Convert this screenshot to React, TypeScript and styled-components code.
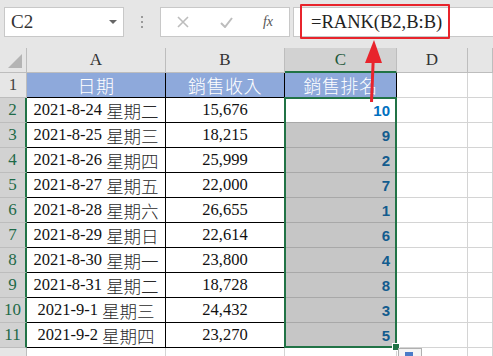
import { Fragment } from "react";
import styled, { createGlobalStyle } from "styled-components";

const GlobalStyle = createGlobalStyle`
  body {
    margin: 0;
    background: #ffffff;
    font-family: "Liberation Serif", "Noto Sans CJK TC", serif;
  }
`

const GREEN = "#217346"
const SERIF = `"Liberation Serif", "Noto Sans CJK TC", serif`

const Frame = styled.div`
  position: relative;
  width: 493px;
  height: 356px;
  overflow: hidden;
  background: #e6e6e6;
`

const Toolbar = styled.div`
  display: flex;
  align-items: flex-start;
  height: 48px;
  box-sizing: border-box;
  padding: 7px 0 0 4px;
`

const NameBox = styled.div`
  display: flex;
  align-items: center;
  justify-content: space-between;
  width: 120px;
  height: 30px;
  box-sizing: border-box;
  padding: 0 6px 0 6px;
  background: #ffffff;
  border: 1px solid #c8c8c8;
  font-family: ${SERIF};
  font-size: 19px;
  color: #333333;
`

const DropArrow = styled.span`
  width: 0;
  height: 0;
  border-left: 4px solid transparent;
  border-right: 4px solid transparent;
  border-top: 4px solid #666666;
`

const Dots = styled.div`
  display: flex;
  flex-direction: column;
  align-items: center;
  justify-content: center;
  gap: 3px;
  width: 36px;
  height: 30px;

  span {
    width: 2px;
    height: 2px;
    background: #9a9a9a;
  }
`

const ButtonBox = styled.div`
  display: flex;
  align-items: center;
  width: 130px;
  height: 30px;
  box-sizing: border-box;
  background: #ffffff;
  border: 1px solid #c8c8c8;
  color: #b8b8b8;
`

const ToolIcon = styled.span<{ $w: number }>`
  display: flex;
  justify-content: center;
  width: ${p => p.$w}px;
`

const Fx = styled.span`
  font-family: ${SERIF};
  font-style: italic;
  font-size: 14px;
  color: #555555;
`

const FormulaBox = styled.div`
  display: flex;
  align-items: center;
  flex: 1;
  height: 30px;
  margin-left: 3px;
  box-sizing: border-box;
  padding-left: 17px;
  background: #ffffff;
  border: 1px solid #c8c8c8;
  border-right: none;
  font-family: ${SERIF};
  font-size: 18.5px;
  color: #222222;
`

const Highlight = styled.div`
  position: absolute;
  left: 300px;
  top: 4px;
  width: 150px;
  height: 35px;
  box-sizing: border-box;
  border: 2px solid #e8242c;
  border-radius: 1px;
  pointer-events: none;
`

const Arrow = styled.svg`
  position: absolute;
  left: 360px;
  top: 38px;
  pointer-events: none;
  z-index: 5;
`

const Sheet = styled.div`
  display: grid;
  grid-template-columns: 27px 139px 119px 112px 71px 25px;
  grid-auto-rows: 25px;
  background: #ffffff;
`

const Corner = styled.div`
  position: relative;
  background: #e6e6e6;
  border-right: 1px solid #bdbdbd;
  border-bottom: 1px solid #bdbdbd;

  &::after {
    content: "";
    position: absolute;
    right: 4px;
    bottom: 4px;
    width: 0;
    height: 0;
    border-left: 14px solid transparent;
    border-bottom: 14px solid #b4b4b4;
  }
`

const ColHeader = styled.div<{ $active?: boolean }>`
  display: flex;
  align-items: center;
  justify-content: center;
  box-sizing: border-box;
  background: ${p => (p.$active ? "#d2d2d2" : "#e6e6e6")};
  border-right: 1px solid #bdbdbd;
  border-bottom: ${p => (p.$active ? `2px solid ${GREEN}` : "1px solid #bdbdbd")};
  font-family: ${SERIF};
  font-size: 17px;
  color: ${p => (p.$active ? "#1e5a3c" : "#333333")};
`

const RowHeader = styled.div<{ $active?: boolean }>`
  display: flex;
  align-items: center;
  justify-content: center;
  box-sizing: border-box;
  background: ${p => (p.$active ? "#d2d2d2" : "#e6e6e6")};
  border-right: ${p => (p.$active ? `2px solid ${GREEN}` : "1px solid #bdbdbd")};
  border-bottom: 1px solid #bdbdbd;
  font-family: ${SERIF};
  font-size: 17px;
  color: ${p => (p.$active ? "#1e6a48" : "#444444")};
`

type CellKind = "title" | "table" | "plain" | "rank" | "rankActive"

const Cell = styled.div<{ $kind: CellKind; $align?: string }>`
  position: relative;
  display: flex;
  align-items: center;
  justify-content: ${p => p.$align || "center"};
  box-sizing: border-box;
  padding: 0 6px;
  white-space: nowrap;
  font-family: ${SERIF};
  font-size: 16.5px;
  color: #111111;
  background: ${p =>
    p.$kind === "title" ? "#8ea9db" : p.$kind === "rank" ? "#c6c6c6" : "#ffffff"};
  border-right: 1px solid
    ${p => (p.$kind === "title" || p.$kind === "table" ? "#000000" : "#d4d4d4")};
  border-bottom: 1px solid
    ${p =>
      p.$kind === "title" || p.$kind === "table"
        ? "#000000"
        : p.$kind === "rank" || p.$kind === "rankActive"
        ? "#a8a8a8"
        : "#d4d4d4"};
`

const Title = styled.span`
  color: #ffffff;
  font-size: 18px;
  font-weight: 300;
  letter-spacing: 0.5px;
`

const Week = styled.span`
  margin-left: 4px;
  font-size: 17.5px;
  font-weight: 300;
  color: #2a2a2a;
`

const Rank = styled.span<{ $active?: boolean }>`
  font-family: "Liberation Sans", "Noto Sans", sans-serif;
  font-weight: bold;
  font-size: 15px;
  color: ${p => (p.$active ? "#0070c0" : "#135c8e")};
`

const Selection = styled.div`
  position: absolute;
  left: -1px;
  top: -1px;
  width: 113px;
  height: 251px;
  box-sizing: border-box;
  border: 2px solid ${GREEN};
  pointer-events: none;
  z-index: 2;
`

const FillHandle = styled.div`
  position: absolute;
  right: -5px;
  bottom: -5px;
  width: 6px;
  height: 6px;
  background: ${GREEN};
  border: 1px solid #ffffff;
`

const PasteIcon = styled.div`
  position: absolute;
  left: 112px;
  bottom: -10px;
  width: 22px;
  height: 7px;
  border: 1px solid #b0b0b0;
  border-bottom: none;
  background: #f4f4f4;

  &::after {
    content: "";
    position: absolute;
    left: 6px;
    top: 3px;
    width: 8px;
    height: 4px;
    background: #4a7cc8;
  }
`

const rows = [
  ["2021-8-24", "星期二", "15,676", "10"],
  ["2021-8-25", "星期三", "18,215", "9"],
  ["2021-8-26", "星期四", "25,999", "2"],
  ["2021-8-27", "星期五", "22,000", "7"],
  ["2021-8-28", "星期六", "26,655", "1"],
  ["2021-8-29", "星期日", "22,614", "6"],
  ["2021-8-30", "星期一", "23,800", "4"],
  ["2021-8-31", "星期二", "18,728", "8"],
  ["2021-9-1", "星期三", "24,432", "3"],
  ["2021-9-2", "星期四", "23,270", "5"],
]

const App = () => {
  return (
    <Frame>
      <GlobalStyle />
      <Toolbar>
        <NameBox>
          C2
          <DropArrow />
        </NameBox>
        <Dots>
          <span />
          <span />
          <span />
        </Dots>
        <ButtonBox>
          <ToolIcon $w={44}>
            <svg width="12" height="12" viewBox="0 0 12 12">
              <path d="M1 1 L11 11 M11 1 L1 11" stroke="#bdbdbd" strokeWidth="1.6" />
            </svg>
          </ToolIcon>
          <ToolIcon $w={42}>
            <svg width="13" height="11" viewBox="0 0 13 11">
              <path d="M1 6 L5 10 L12 1" stroke="#bdbdbd" strokeWidth="2" fill="none" />
            </svg>
          </ToolIcon>
          <ToolIcon $w={42}>
            <Fx>fx</Fx>
          </ToolIcon>
        </ButtonBox>
        <FormulaBox>=RANK(B2,B:B)</FormulaBox>
      </Toolbar>

      <Sheet>
        <Corner />
        <ColHeader>A</ColHeader>
        <ColHeader>B</ColHeader>
        <ColHeader $active>C</ColHeader>
        <ColHeader>D</ColHeader>
        <ColHeader />

        <RowHeader>1</RowHeader>
        <Cell $kind="title"><Title>日期</Title></Cell>
        <Cell $kind="title"><Title>銷售收入</Title></Cell>
        <Cell $kind="title"><Title>銷售排名</Title></Cell>
        <Cell $kind="plain" />
        <Cell $kind="plain" />

        {rows.map((row, index) => (
          <Fragment key={index}>
            <RowHeader $active>{index + 2}</RowHeader>
            <Cell $kind="table">
              {row[0]}
              <Week>{row[1]}</Week>
            </Cell>
            <Cell $kind="table">{row[2]}</Cell>
            <Cell $kind={index === 0 ? "rankActive" : "rank"} $align="flex-end">
              <Rank $active={index === 0}>{row[3]}</Rank>
              {index === 0 && (
                <Selection>
                  <FillHandle />
                  <PasteIcon />
                </Selection>
              )}
            </Cell>
            <Cell $kind="plain" />
            <Cell $kind="plain" />
          </Fragment>
        ))}

        <RowHeader />
        <Cell $kind="plain" />
        <Cell $kind="plain" />
        <Cell $kind="plain" />
        <Cell $kind="plain" />
        <Cell $kind="plain" />
      </Sheet>

      <Highlight />
      <Arrow width="30" height="70" viewBox="0 0 30 70">
        <path d="M11.5 64 L13.2 22" stroke="#e8242c" strokeWidth="3" />
        <path d="M14 2 L5 25 L22 25 Z" fill="#e8242c" />
      </Arrow>
    </Frame>
  );
}

export default App;
